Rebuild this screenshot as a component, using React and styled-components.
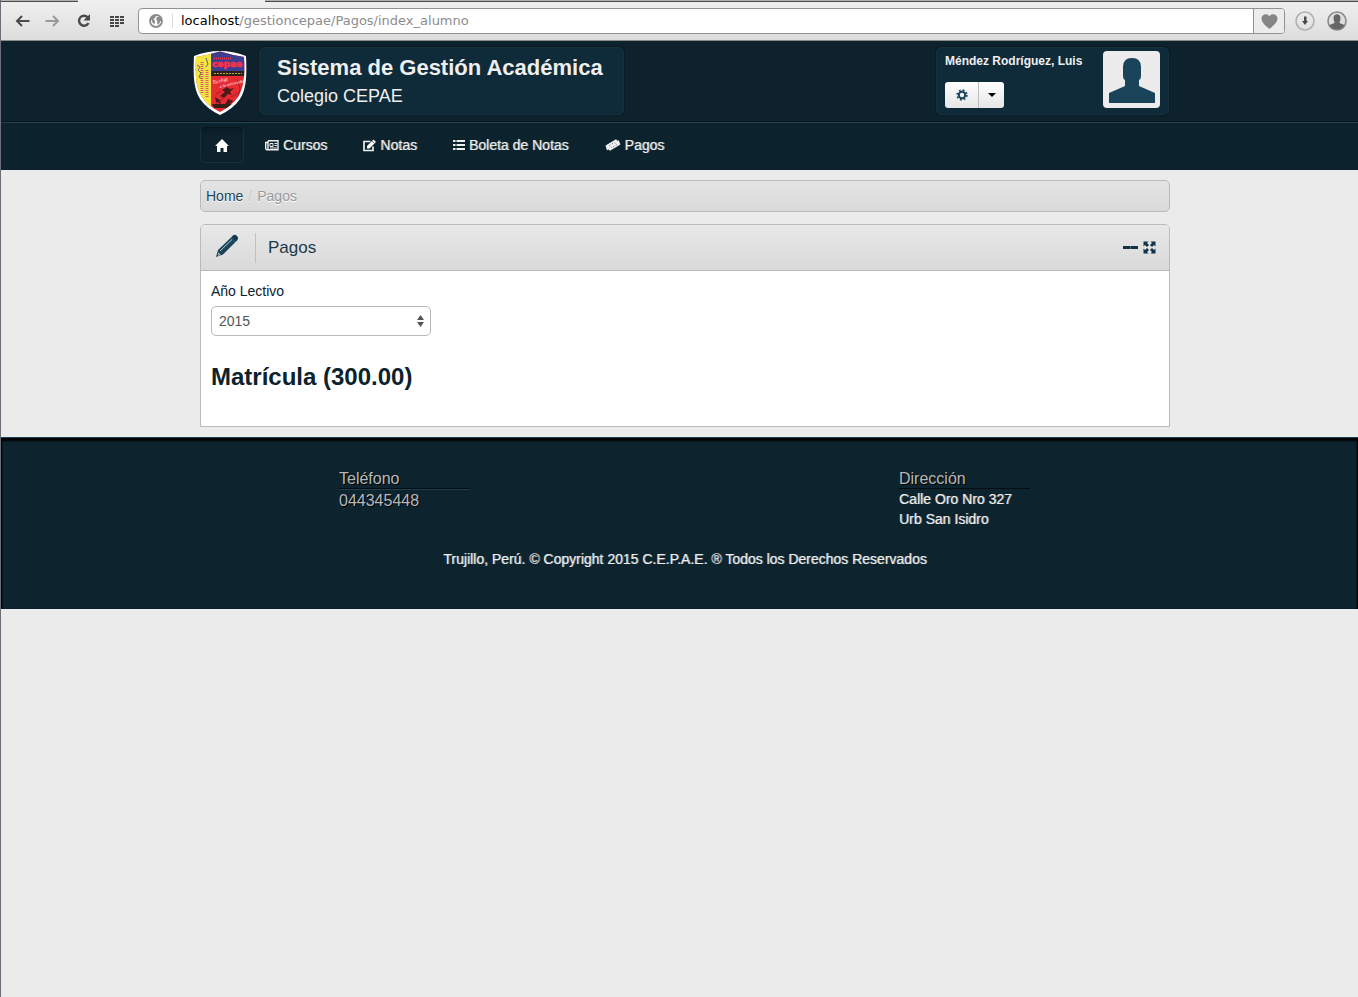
import React from "react";
import styled, { createGlobalStyle, css } from "styled-components";

const Global = createGlobalStyle`
  * { box-sizing: border-box; }
  html { background: #ebebeb; }
  body {
    margin: 0;
    color: #0c222c;
    font: 14px/20px "Liberation Sans", Helvetica, Arial, sans-serif;
  }
  h1, h2, h3, p, ul, ol { margin: 0; padding: 0; font-weight: normal; }
  ul, ol { list-style: none; }
  a { text-decoration: none; color: inherit; }
  button { font: inherit; padding: 0; margin: 0; border: 0; background: none; color: inherit; }
  svg { display: block; flex: none; }
`;

const Page = styled.div`
  min-height: 100vh;
  border-left: 1px solid #6d6f78;
`;

const TabStrip = styled.div`
  display: flex;
  height: 2px;
  background: #ececec;
`;

const Tab = styled.span`
  flex: ${(p) => (p.$width ? `0 0 ${p.$width}px` : "1")};
  background: ${(p) => (p.$active ? "#f0f0f0" : "#b2b3ae")};
  border-bottom: 1px solid ${(p) => (p.$active ? "#f0f0f0" : "#4c4c4c")};
`;

const Toolbar = styled.div`
  display: flex;
  align-items: center;
  height: 39px;
  padding: 0 11px;
  background: linear-gradient(#efefef, #dddddd);
  border-bottom: 1px solid #8b8b8b;
`;

const ToolButton = styled.button`
  display: flex;
  align-items: center;
  justify-content: center;
  width: 20px;
  height: 20px;
  margin-right: ${(p) => p.$after || 0}px;
`;

const AddressBar = styled.div`
  display: flex;
  align-items: center;
  flex: 1;
  height: 26px;
  border: 1px solid #919191;
  border-radius: 4px;
  background: #fff;
  overflow: hidden;
  margin-right: 10px;
`;

const SiteInfo = styled.button`
  display: flex;
  align-items: center;
  justify-content: center;
  width: 34px;
  height: 14px;
  border-right: 1px solid #dadada;
`;

const Address = styled.p`
  flex: 1;
  padding-left: 8px;
  color: #8c8c8c;
  font: 13px/20px "DejaVu Sans", "Lucida Grande", sans-serif;
  b { color: #000; font-weight: normal; }
`;

const Favourite = styled.button`
  display: flex;
  align-items: center;
  justify-content: center;
  width: 31px;
  height: 24px;
  border-left: 1px solid #919191;
  background: #ececec;
`;

const Band = styled.div`
  padding-left: 11px;
`;

const Container = styled.div`
  max-width: 970px;
  margin: 0 auto;
`;

const Header = styled(Band).attrs({ as: "header" })`
  background: #0d222d;
`;

const Brand = styled(Container)`
  display: flex;
  align-items: flex-start;
  height: 80px;
  padding-top: 5px;
`;

const LogoLink = styled.a`
  margin: 3px 0 0 -8px;
`;

const panel = css`
  height: 68px;
  border: 1px solid #14303d;
  border-radius: 5px;
  background: #0f2a38;
  box-shadow: 0 0 0 1px #0a1b24;
`;

const TitlePanel = styled.div`
  ${panel}
  width: 365px;
  margin: 1px 0 0 11px;
  padding: 6px 17px;
  color: #efefef;
`;

const Title = styled.h1`
  font-size: 22px;
  line-height: 28px;
  font-weight: bold;
  white-space: nowrap;
`;

const Subtitle = styled.p`
  font-size: 18px;
  line-height: 28px;
`;

const UserPanel = styled.div`
  ${panel}
  display: flex;
  justify-content: space-between;
  width: 233px;
  margin: 1px 1px 0 auto;
  padding: 3px 8px;
`;

const UserName = styled.p`
  color: #efefef;
  font-size: 12px;
  font-weight: bold;
  line-height: 20px;
  white-space: nowrap;
`;

const ButtonGroup = styled.div`
  display: inline-flex;
  margin-top: 11px;
  border-radius: 3px;
  overflow: hidden;
  background: linear-gradient(#ffffff, #e6e6e6);
`;

const GroupButton = styled.button`
  display: flex;
  align-items: center;
  justify-content: center;
  width: ${(p) => p.$width}px;
  height: 26px;
  & + & { border-left: 1px solid #bdbdbd; }
`;

const Avatar = styled.div`
  display: flex;
  align-items: center;
  justify-content: center;
  width: 57px;
  height: 57px;
  border-radius: 4px;
  background: #ececec;
`;

const NavBand = styled(Band).attrs({ as: "nav" })`
  border-top: 1px solid #06131a;
  background: #0c232d;
  box-shadow: inset 0 1px #1e4456;
`;

const NavList = styled.ul`
  display: flex;
  gap: 6px;
  height: 48px;
  padding-top: 5px;
`;

const bright = css`
  color: #efefef;
  text-shadow: 1px 0 0 rgba(239, 239, 239, 0.45);
`;

const NavLink = styled.a`
  ${bright}
  display: flex;
  align-items: center;
  gap: 4px;
  height: 36px;
  padding: 0 15px;
  border: 1px solid transparent;
  border-width: 1px 0;
  border-radius: 5px;
  white-space: nowrap;
  ${(p) =>
    p.$current &&
    css`
      width: 44px;
      padding: 0;
      justify-content: center;
      border: 1px solid #14333f;
      border-top-color: #07151c;
      background: linear-gradient(#0a1c25, #0d222d 8px);
    `}
`;

const Main = styled(Band).attrs({ as: "main" })`
  padding-top: 10px;
  padding-bottom: 10px;
`;

const Breadcrumb = styled.ol`
  display: flex;
  gap: 5px;
  height: 32px;
  margin-bottom: 12px;
  padding: 5px;
  border: 1px solid #bababa;
  border-radius: 5px;
  background: linear-gradient(#e4e4e4, #dadada);
  color: #999;
  text-shadow: 0 1px 0 #fff;
  a { color: #1a445a; }
  li + li::before { content: "/"; margin-right: 5px; color: #c4c4c4; }
`;

const Box = styled.section`
  border: 1px solid #bababa;
  border-radius: 5px 5px 0 0;
  background: #fff;
`;

const BoxHeader = styled.header`
  display: flex;
  align-items: center;
  height: 46px;
  padding-right: 13px;
  border-bottom: 1px solid #bababa;
  border-radius: 4px 4px 0 0;
  background: linear-gradient(#e8e8e8, #d9d9d9);
  color: #1a3a49;
`;

const BoxIcon = styled.span`
  display: flex;
  align-items: center;
  justify-content: center;
  width: 55px;
  height: 30px;
  padding: 0 2px 3px 0;
  border-right: 1px solid #c0c0c0;
`;

const BoxTitle = styled.h2`
  flex: 1;
  padding-left: 12px;
  font-size: 17px;
  line-height: 20px;
`;

const BoxTool = styled.button`
  margin-left: 5px;
`;

const BoxBody = styled.div`
  padding: 10px 10px 29px;
`;

const Label = styled.label`
  display: block;
  margin-bottom: 5px;
`;

const SelectWrap = styled.div`
  position: relative;
  width: 220px;
  svg { position: absolute; right: 7px; top: 9px; pointer-events: none; }
`;

const Select = styled.select`
  display: block;
  appearance: none;
  width: 100%;
  height: 30px;
  padding: 0 7px;
  border: 1px solid #b8b8b8;
  border-radius: 5px;
  background: #fff;
  color: #555;
  font: inherit;
`;

const Heading = styled.h3`
  margin-top: 21px;
  font-size: 24px;
  line-height: 40px;
  font-weight: bold;
`;

const Footer = styled(Band).attrs({ as: "footer" })`
  height: 172px;
  padding-top: 31px;
  background: #0d232e;
  border-top: 1px solid #1b4255;
  box-shadow: inset 0 3px 2px #000, inset -2px 0 2px -1px #000, inset 2px 0 2px -1px #000;
`;

const FooterColumns = styled.div`
  display: grid;
  grid-template-columns: 560px 1fr;
  padding-left: 139px;
`;

const Contact = styled.section`
  ${bright}
  min-height: 80px;
`;

const muted = css`
  color: #b9b9b9;
  font-size: 16px;
  text-shadow: 1px 1px 0 #000;
`;

const ContactTitle = styled.h3`
  ${muted}
  width: 131px;
  height: 20px;
  border-bottom: 1px solid #040d12;
  box-shadow: ${(p) => (p.$lit ? "0 1px #1b4050" : "none")};
`;

const Phone = styled.p`
  ${muted}
  margin-top: 2px;
`;

const Copyright = styled.p`
  ${bright}
  text-align: center;
`;

const Shield = () => (
  <svg width="56" height="68" viewBox="0 0 56 68">
    <defs>
      <clipPath id="shield">
        <path d="M4 9Q16 7 28 3.500Q40 7 52 9C53 29 52 39 46 49Q40 58 28 64Q16 58 10 49C4 39 3 29 4 9Z" />
      </clipPath>
    </defs>
    <path d="M2 7Q15 2 28 2Q41 2 54 7C55 29 54 40 48 50Q41 60 28 66Q15 60 8 50C2 40 1 29 2 7Z" fill="#fff" />
    <g clipPath="url(#shield)" transform="translate(0 -1)">
      <path d="M0 0h56v68H0z" fill="#e72b32" />
      <path d="M0 0h19v68H0z" fill="#f4e43e" />
      <path d="M19 0h37v23H19z" fill="#3d3d91" />
      <path d="M19 23h37v5H19z" fill="#2b2118" />
      <path d="M10 14v31M15 22v28" stroke="#e3577b" strokeWidth="3" strokeDasharray="1 1" />
      <path d="M5 17l3 2-2 3 3 3-2 4 3 2M14 10l2 6-2 3" stroke="#676767" fill="none" />
      <path d="M22 25.500h28M24 59h14" stroke="#b9a52c" strokeDasharray="2 1" />
      <path d="M22 10.500h18" stroke="#e43a49" strokeWidth="2" strokeDasharray="1 1" />
      <path d="M30 42l5-3 3 2 4-1-4 4 2 3-4-1-4 4-4-2 5-4zM23 49l5 3 1 4-5-2zM36 51l5 2-5 5-5 2z" fill="#4d1a1c" />
      <path d="M20 56h20l-3 4H22z" fill="#342018" />
      <path d="M45 31l3 10-2 8M24 46l5-3M39 49l7-4M24 56l9-7" stroke="#a42025" fill="none" />
    </g>
    <text x="20" y="18" fill="#ff3048" stroke="#ff3048" strokeWidth=".6" fontFamily="DejaVu Sans" fontWeight="bold" fontSize="9">cepae</text>
    <text x="21" y="35" fill="#fff" fontFamily="Liberation Serif" fontStyle="italic" fontSize="5" transform="rotate(-14 21 35)">Tu elige</text>
    <text x="28" y="39" fill="#fff" fontFamily="Liberation Serif" fontStyle="italic" fontSize="4" transform="rotate(-14 28 39)">a la universidad</text>
  </svg>
);

const HomeIcon = () => (
  <svg width="14" height="13" viewBox="0 0 14 13" fill="#fff"><path d="M7 0l6.500 6.500V7H12v6H8.500V9h-3v4H2V7H.500v-.500z" /></svg>
);
const CoursesIcon = () => (
  <svg width="14" height="11" viewBox="0 0 14 11" fill="none" stroke="#efefef">
    <path d="M3 .7h10v9H2Q.700 9.700.700 8V2.500H3M3 1v8.500" strokeWidth="1.400" />
    <path d="M5 3.500h3v3H5zM9.500 3.500H12M9.500 5.500H12M5 8H12" />
  </svg>
);
const NotesIcon = () => (
  <svg width="13" height="13" viewBox="0 0 13 13">
    <path d="M7.500 2.500H1v9h9V7.500" fill="none" stroke="#efefef" strokeWidth="1.700" />
    <path d="M4 9.500V7l6.500-6.500L13 3 6.500 9.500z" fill="#fff" />
    <path d="M9.300 2.200l2 2" stroke="#0d222d" strokeWidth=".7" />
  </svg>
);
const ListIcon = () => (
  <svg width="12" height="10" viewBox="0 0 12 10" stroke="#efefef" strokeWidth="2">
    <path d="M0 1h2.500M3.500 1h8.500M0 5h2.500M3.500 5h8.500M0 9h2.500M3.500 9h8.500" />
  </svg>
);
const TicketIcon = () => (
  <svg width="16" height="12" viewBox="0 0 16 12">
    <path d="M.500 6.500L11 .300l1.300 1.400 1.400-.400 1.700 4.200L5 11.700l-1.500-1.200-1.600.700z" fill="#efefef" />
    <path d="M4.500 6.500l5-3 2.200 2.200-5 3z" fill="none" stroke="#0d222d" strokeWidth=".7" strokeDasharray="1 2" />
  </svg>
);
const Pencil = () => (
  <svg width="24" height="24" viewBox="0 0 24 24">
    <path d="M1 23l2-7L16 3.500l4.500 4.500L8 20.500z" fill="#1a445a" />
    <path d="M16 3.500l2-2q2-1.500 4 .5t.5 4L20.500 8z" fill="#123a50" />
    <path d="M5 17L17 5.500" stroke="#b9c9d1" strokeWidth="1" />
    <path d="M3 18l3 3-3 1z" fill="#93a9b4" />
  </svg>
);

export default function App() {
  return (
    <Page>
      <Global />
      <TabStrip>
        <Tab $width={77} />
        <Tab $width={187} $active />
        <Tab />
      </TabStrip>
      <Toolbar>
        <ToolButton $after={10} aria-label="Atrás">
          <svg width="15" height="12" viewBox="0 0 15 12" fill="none" stroke="#4a4a4a" strokeWidth="2"><path d="M2 6h12.500M7 1L2 6l5 5" /></svg>
        </ToolButton>
        <ToolButton $after={12} aria-label="Adelante">
          <svg width="15" height="12" viewBox="0 0 15 12" fill="none" stroke="#999" strokeWidth="2"><path d="M.500 6H13M8 1l5 5-5 5" /></svg>
        </ToolButton>
        <ToolButton $after={13} aria-label="Recargar">
          <svg width="14" height="14" viewBox="0 0 14 14">
            <path d="M11 3.600A5 5 0 1 0 11.500 9" fill="none" stroke="#4a4a4a" strokeWidth="2.400" />
            <path d="M13 0v6.500H6.500z" fill="#4a4a4a" />
          </svg>
        </ToolButton>
        <ToolButton $after={11} aria-label="Accesos">
          <svg width="14" height="11" viewBox="0 0 14 11" stroke="#454545" strokeWidth="2">
            <path d="M0 1h14M0 4h14M0 7h14M0 10h9" strokeDasharray="4 1" />
          </svg>
        </ToolButton>
        <AddressBar>
          <SiteInfo aria-label="Información del sitio">
            <svg width="14" height="14" viewBox="0 0 14 14">
              <circle cx="7" cy="7" r="6" fill="#fff" stroke="#8b8b8b" strokeWidth="1.800" />
              <path d="M1.500 4l3-2.500 2.500.500-1 2-1.500 1 1.500 2-.500 3.500-2-2zM8 3l3 0 1.500 3-1.500 2-1.500 3-1.500-2 .500-2-1.500-1.500z" fill="#8b8b8b" />
            </svg>
          </SiteInfo>
          <Address><b>localhost</b>/gestioncepae/Pagos/index_alumno</Address>
          <Favourite aria-label="Favorito">
            <svg width="17" height="15" viewBox="0 0 17 15" fill="#858585"><path d="M8.500 15C5 12 .500 8.500.500 4.500c0-4.500 6-6 8-2 2-4 8-2.500 8 2 0 4-4.500 7.500-8 10.500z" /></svg>
          </Favourite>
        </AddressBar>
        <ToolButton $after={12} aria-label="Descargas">
          <svg width="20" height="20" viewBox="0 0 20 20">
            <circle cx="10" cy="10" r="9" fill="none" stroke="#b0b0b0" strokeWidth="1.600" />
            <path d="M9 5.500h2.500V10H13l-3 4-3-4h2z" fill="#4a4a4a" />
          </svg>
        </ToolButton>
        <ToolButton aria-label="Perfil">
          <svg width="20" height="20" viewBox="0 0 20 20">
            <circle cx="10" cy="10" r="9" fill="#dedede" stroke="#8a8a8a" strokeWidth="1.600" />
            <path d="M6.500 7c0-5 7-5 7 0 0 3-1 3.500-1 5l5 2q-2.500 4.500-7.500 4.500T2.500 14l5-2c0-1.500-1-2-1-5z" fill="#666" />
          </svg>
        </ToolButton>
      </Toolbar>

      <Header>
        <Brand>
          <LogoLink href="#" aria-label="CEPAE"><Shield /></LogoLink>
          <TitlePanel>
            <Title>Sistema de Gestión Académica</Title>
            <Subtitle>Colegio CEPAE</Subtitle>
          </TitlePanel>
          <UserPanel>
            <div>
              <UserName>Méndez Rodríguez, Luis</UserName>
              <ButtonGroup>
                <GroupButton $width={33} aria-label="Configuración">
                  <svg width="12" height="12" viewBox="0 0 12 12" fill="none" stroke="#1a445a">
                    <circle cx="6" cy="6" r="3.200" strokeWidth="2" />
                    <circle cx="6" cy="6" r="4.900" strokeWidth="1.600" strokeDasharray="1.900 1.950" />
                  </svg>
                </GroupButton>
                <GroupButton $width={26} aria-label="Más opciones">
                  <svg width="8" height="4" viewBox="0 0 8 4"><path d="M0 0h8L4 4z" /></svg>
                </GroupButton>
              </ButtonGroup>
            </div>
            <Avatar>
              <svg width="46" height="46" viewBox="0 0 46 46" fill="#1a445a">
                <path d="M14 10Q14 1 23 1t9 9v9q0 3-2 4v6l16 7v10H0V36l16-7v-6q-2-1-2-4z" />
              </svg>
            </Avatar>
          </UserPanel>
        </Brand>
      </Header>

      <NavBand>
        <Container>
          <NavList>
            <li><NavLink href="#" $current aria-label="Inicio"><HomeIcon /></NavLink></li>
            <li><NavLink href="#"><CoursesIcon />Cursos</NavLink></li>
            <li><NavLink href="#"><NotesIcon />Notas</NavLink></li>
            <li><NavLink href="#"><ListIcon />Boleta de Notas</NavLink></li>
            <li><NavLink href="#"><TicketIcon />Pagos</NavLink></li>
          </NavList>
        </Container>
      </NavBand>

      <Main>
        <Container>
          <Breadcrumb>
            <li><a href="#">Home</a></li>
            <li>Pagos</li>
          </Breadcrumb>
          <Box>
            <BoxHeader>
              <BoxIcon><Pencil /></BoxIcon>
              <BoxTitle>Pagos</BoxTitle>
              <BoxTool aria-label="Minimizar">
                <svg width="15" height="3" viewBox="0 0 15 3" fill="#0f3448">
                  <path d="M0 0h15v3H0z" />
                  <path d="M7 0h1v3H7z" fill="#5a6f6a" />
                </svg>
              </BoxTool>
              <BoxTool aria-label="Expandir">
                <svg width="13" height="13" viewBox="0 0 13 13" fill="#0f3448">
                  <path d="M.500.500h5L4 2l2 2-2 2-2-2L.500 5.500zM12.500.500h-5L9 2 7 4l2 2 2-2 1.500 1.500zM.500 12.500h5L4 11l2-2-2-2-2 2L.500 7.500zM12.500 12.500h-5L9 11 7 9l2-2 2 2 1.500-1.500z" />
                </svg>
              </BoxTool>
            </BoxHeader>
            <BoxBody>
              <Label htmlFor="year">Año Lectivo</Label>
              <SelectWrap>
                <Select id="year" defaultValue="2015"><option>2015</option></Select>
                <svg width="7" height="12" viewBox="0 0 7 12" fill="#555"><path d="M3.500 0L7 5H0zM0 7h7l-3.500 5z" /></svg>
              </SelectWrap>
              <Heading>Matrícula (300.00)</Heading>
            </BoxBody>
          </Box>
        </Container>
      </Main>

      <Footer>
        <Container>
          <FooterColumns>
            <Contact>
              <ContactTitle $lit>Teléfono</ContactTitle>
              <Phone>044345448</Phone>
            </Contact>
            <Contact>
              <ContactTitle>Dirección</ContactTitle>
              <p>Calle Oro Nro 327</p>
              <p>Urb San Isidro</p>
            </Contact>
          </FooterColumns>
          <Copyright>Trujillo, Perú. © Copyright 2015 C.E.P.A.E. ® Todos los Derechos Reservados</Copyright>
        </Container>
      </Footer>
    </Page>
  );
}
